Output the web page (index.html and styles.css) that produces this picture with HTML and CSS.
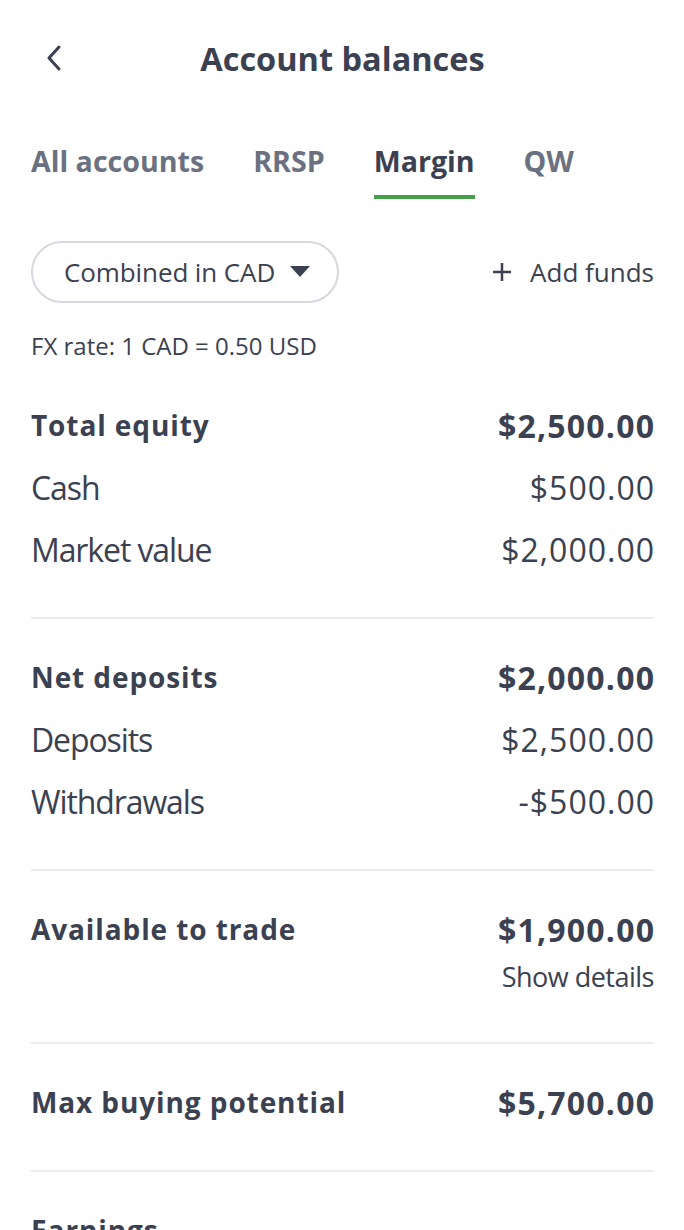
FILE: index.html
```html
<!DOCTYPE html>
<html lang="en">
<head>
    <meta charset="UTF-8">
    <meta name="viewport" content="width=device-width, initial-scale=1.0">
    <title>Account balances</title>
    <link rel="stylesheet" href="styles.css">
</head>
<body>

<header class="header">
    <button class="back" aria-label="Back">
        <svg width="18" height="26" viewBox="0 0 18 26"><path d="M14 2 L4 13 L14 24" fill="none" stroke="#3b4150" stroke-width="3" stroke-linecap="round" stroke-linejoin="round"/></svg>
    </button>
    <h1>Account balances</h1>
    <span></span>
</header>

<nav class="tabs">
    <a class="tab">All accounts</a>
    <a class="tab">RRSP</a>
    <a class="tab active">Margin</a>
    <a class="tab">QW</a>
</nav>

<div class="toolbar">
    <button class="pill">
        Combined in CAD
        <svg width="20" height="12" viewBox="0 0 20 12"><path d="M0 0 H20 L10 11 Z" fill="#3b4150"/></svg>
    </button>
    <a class="add-funds">
        <svg width="20" height="20" viewBox="0 0 20 20"><path d="M10 1 V19 M1 10 H19" stroke="#3b4150" stroke-width="2.5"/></svg>
        Add funds
    </a>
</div>

<p class="fx">FX rate: 1 CAD = 0.50 USD</p>

<section class="section">
    <div class="row total"><span class="label">Total equity</span><span class="value">$2,500.00</span></div>
    <div class="row"><span class="label">Cash</span><span class="value">$500.00</span></div>
    <div class="row"><span class="label">Market value</span><span class="value">$2,000.00</span></div>
</section>

<section class="section">
    <div class="row total"><span class="label">Net deposits</span><span class="value">$2,000.00</span></div>
    <div class="row"><span class="label">Deposits</span><span class="value">$2,500.00</span></div>
    <div class="row"><span class="label">Withdrawals</span><span class="value">-$500.00</span></div>
</section>

<section class="section">
    <div class="row total"><span class="label">Available to trade</span><span class="value">$1,900.00</span></div>
    <div class="details"><a>Show details</a></div>
</section>

<section class="section">
    <div class="row total"><span class="label">Max buying potential</span><span class="value">$5,700.00</span></div>
</section>

<section class="section">
    <div class="row total"><span class="label">Earnings</span></div>
</section>

</body>
</html>
```

FILE: styles.css
```css
/* Basic Reset */
* {
    margin: 0;
    padding: 0;
    box-sizing: border-box;
}

body {
    font-family: "Open Sans", "Liberation Sans", sans-serif;
    color: #3b4150;
    background-color: #fff;
    padding: 0 30px 0 31px;
}

button {
    font-family: inherit;
    background: none;
    border: none;
    color: inherit;
    cursor: pointer;
}

/* Header */
.header {
    height: 116px;
    display: grid;
    grid-template-columns: 1fr auto 1fr;
    align-items: center;
}

.back {
    justify-self: start;
    display: flex;
    padding: 0 0 0 14px;
}

.header h1 {
    font-size: 32.5px;
    font-weight: 700;
}

/* Tabs */
.tabs {
    display: flex;
    gap: 49px;
}

.tab {
    font-size: 28.6px;
    font-weight: 700;
    line-height: 40px;
    color: #6b7180;
    padding-top: 25px;
    padding-bottom: 14px;
    border-bottom: 4px solid transparent;
}

.tab.active {
    color: #3b4150;
    border-bottom-color: #43a047;
}

/* Toolbar */
.toolbar {
    margin-top: 42px;
    display: flex;
    justify-content: space-between;
    align-items: center;
}

.pill {
    height: 62px;
    padding: 0 27px 0 31px;
    border: 2px solid #d5d8e0;
    border-radius: 31px;
    font-size: 26px;
    letter-spacing: -0.1px;
    display: flex;
    align-items: center;
    gap: 15px;
}

.add-funds {
    display: flex;
    align-items: center;
    gap: 18px;
    font-size: 26px;
}

.fx {
    font-size: 24px;
    line-height: 28px;
    margin-top: 29px;
    margin-bottom: 7px;
}

/* Sections */
.section {
    padding: 27px 0 37px;
    border-bottom: 2px solid #ebebf0;
}

.row {
    height: 62px;
    display: flex;
    justify-content: space-between;
    align-items: center;
    font-size: 32px;
}

.row .label {
    letter-spacing: -1.1px;
}

.row .value {
    letter-spacing: 1px;
    margin-right: -1px;
}

.row.total {
    font-weight: 700;
}

.row.total .label {
    font-size: 28px;
    letter-spacing: 0.9px;
}

.row.total .value {
    letter-spacing: 1.2px;
    margin-right: -1.2px;
}

.details {
    text-align: right;
    font-size: 27px;
    letter-spacing: -0.5px;
    line-height: 30px;
    margin-top: 2px;
    padding-bottom: 13px;
}
```
